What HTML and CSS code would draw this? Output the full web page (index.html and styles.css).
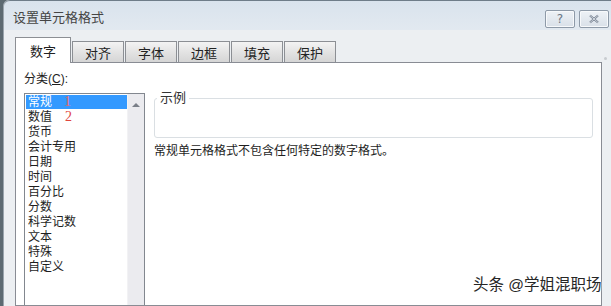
FILE: index.html
```html
<!DOCTYPE html>
<html lang="zh">
<head>
<meta charset="utf-8">
<link rel="stylesheet" href="styles.css">
</head>
<body>
<div class="window">
  <div class="titlebar">
    <span class="title">设置单元格格式</span>
    <div class="caption-buttons">
      <span class="cbtn">?</span>
      <span class="cbtn">
        <svg width="14" height="10" viewBox="0 0 14 10"><path d="M3 1.5 L11 8.5 M11 1.5 L3 8.5" stroke="#6b7686" stroke-width="2" fill="none"/><path d="M3 1.5 L11 8.5 M11 1.5 L3 8.5" stroke="#e8edf2" stroke-width="0.8" fill="none"/></svg>
      </span>
    </div>
  </div>
  <div class="body">
    <div class="tabs">
      <div class="tab active">数字</div>
      <div class="tab">对齐</div>
      <div class="tab">字体</div>
      <div class="tab">边框</div>
      <div class="tab">填充</div>
      <div class="tab">保护</div>
    </div>
    <div class="panel">
      <div class="left-col">
        <div class="label">分类(<u>C</u>):</div>
        <div class="listbox">
          <ul class="items">
            <li class="selected">常规<span class="mark m1">1</span></li>
            <li>数值<span class="mark m2">2</span></li>
            <li>货币</li>
            <li>会计专用</li>
            <li>日期</li>
            <li>时间</li>
            <li>百分比</li>
            <li>分数</li>
            <li>科学记数</li>
            <li>文本</li>
            <li>特殊</li>
            <li>自定义</li>
          </ul>
          <div class="scrollbar">
            <svg width="8" height="5" viewBox="0 0 8 5"><path d="M0 5 L4 1 L8 5 Z" fill="#7a7f88"/></svg>
          </div>
        </div>
      </div>
      <div class="right-col">
        <fieldset class="sample">
          <legend>示例</legend>
        </fieldset>
        <p class="desc">常规单元格格式不包含任何特定的数字格式。</p>
      </div>
    </div>
    <div class="edge-dot"></div>
  </div>
</div>
<div class="watermark">头条 @学姐混职场</div>
</body>
</html>
```

FILE: styles.css
```css
html, body {
  margin: 0;
  padding: 0;
}
body {
  width: 611px;
  height: 306px;
  overflow: hidden;
  background: #5d6a72;
  font-family: "Liberation Sans", "Noto Sans CJK SC", sans-serif;
  font-size: 12px;
  color: #1e1e1e;
  position: relative;
}
.window {
  margin-left: 3px;
  height: 306px;
  background: #eceff2;
  border-top-left-radius: 6px;
  border-left: 1px solid #9aa4ad;
  display: flex;
  flex-direction: column;
}
.titlebar {
  height: 30px;
  flex: none;
  display: flex;
  align-items: center;
  justify-content: space-between;
  background: linear-gradient(#d9e3ed, #e2e9f0);
  border-top-left-radius: 6px;
  border-top: 1px solid #6f7d89;
  box-sizing: border-box;
}
.title {
  padding-left: 9px;
  font-size: 13px;
  color: #454545;
  padding-top: 2px;
}
.caption-buttons {
  display: flex;
  gap: 4px;
  padding-top: 6px;
  padding-right: 2px;
}
.cbtn {
  width: 28px;
  height: 16px;
  border: 1px solid #8e9aa8;
  border-radius: 2px;
  background: linear-gradient(#eef2f6, #d9e0e8);
  display: flex;
  align-items: center;
  justify-content: center;
  color: #6b7583;
  font-family: "DejaVu Sans", sans-serif;
  font-size: 12px;
  box-shadow: inset 0 0 0 1px #f7f9fb;
}
.body {
  flex: 1;
  display: flex;
  flex-direction: column;
  padding-left: 11px;
  position: relative;
}
.tabs {
  display: flex;
  align-items: flex-end;
  gap: 1px;
  height: 25px;
  margin-top: 7px;
}
.tab {
  height: 21px;
  width: 52px;
  box-sizing: border-box;
  border: 1px solid #8c8f94;
  border-bottom: none;
  background: linear-gradient(#f3f3f3, #e2e2e2 55%, #d5d5d5);
  display: flex;
  align-items: center;
  justify-content: center;
  font-size: 13px;
  color: #222;
  padding-top: 1px;
}
.tab.active {
  width: 56px;
  background: #fff;
  position: relative;
  margin-bottom: -1px;
  height: 26px;
  padding-bottom: 2px;
}
.panel {
  flex: 1;
  width: 587px;
  box-sizing: border-box;
  background: #fff;
  border: 1px solid #898c94;
  display: flex;
  gap: 9px;
  padding-left: 8px;
}
.left-col {
  width: 121px;
  display: flex;
  flex-direction: column;
}
.label {
  margin-top: 9px;
  height: 21px;
  line-height: 14px;
  font-size: 12px;
}
.listbox {
  flex: 1;
  border: 1px solid #82878f;
  border-bottom: none;
  display: flex;
}
.items {
  list-style: none;
  margin: 0;
  padding: 1px 0 0 1px;
  flex: 1;
}
.items li {
  height: 15px;
  line-height: 15px;
  padding-left: 2px;
  font-size: 12px;
  position: relative;
  white-space: nowrap;
}
.items li.selected {
  background: #3399ff;
  color: #fff;
  height: 14px;
  line-height: 14px;
  margin-bottom: 1px;
}
.mark {
  position: absolute;
  top: 0;
  font-family: "Liberation Serif", serif;
  font-size: 14px;
  line-height: 14px;
  color: #e0463e;
}
.m1 { left: 38px; color: #e96a6a; }
.m2 { left: 39px; }
.scrollbar {
  width: 17px;
  background: #ebebef;
  display: flex;
  justify-content: center;
  padding-top: 8px;
  box-sizing: border-box;
  border-left: 1px solid #f2f2f4;
}
.right-col {
  width: 439px;
  display: flex;
  flex-direction: column;
}
.sample {
  margin: 29px 0 0 0;
  padding: 0;
  height: 46px;
  box-sizing: border-box;
  border: 1px solid #dadfe3;
  border-radius: 3px;
}
.sample legend {
  margin-left: 2px;
  padding: 0 3px;
  font-size: 13px;
  line-height: 12px;
  height: 12px;
  color: #333;
}
.desc {
  margin: 6px 0 0 0;
  font-size: 12px;
  line-height: 14px;
  color: #1e1e1e;
}
.edge-dot {
  position: absolute;
  right: 4px;
  top: 27px;
  width: 3px;
  height: 3px;
  border-radius: 50%;
  background: #c8ccd0;
}
.watermark {
  position: absolute;
  left: 473px;
  top: 275px;
  font-size: 15.5px;
  line-height: 20px;
  color: #262626;
  text-shadow: 0 0 2px #fff, 0 0 2px #fff;
  white-space: nowrap;
}
```
